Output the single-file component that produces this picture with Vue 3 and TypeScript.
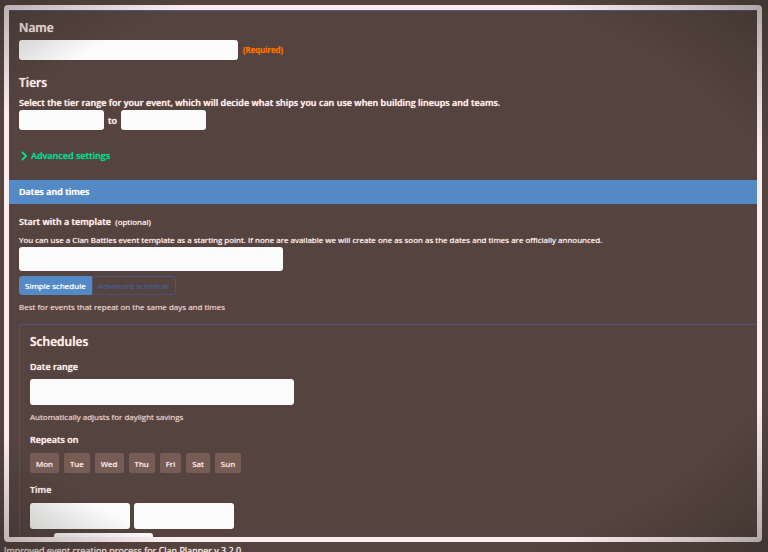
<script setup lang="ts">
import { ref } from 'vue'

const days = ['Mon', 'Tue', 'Wed', 'Thu', 'Fri', 'Sat', 'Sun']
const selectedDays = ref<string[]>([])
const mode = ref<'simple' | 'advanced'>('simple')

function toggleDay(day: string): void {
  selectedDays.value = selectedDays.value.includes(day)
    ? selectedDays.value.filter((d) => d !== day)
    : [...selectedDays.value, day]
}
</script>

<template>
  <main class="page">
    <form class="frame" @submit.prevent>
      <section class="section general">
        <label class="heading" for="name">Name</label>
        <div class="row name-row">
          <input id="name" class="field name-field" type="text" required />
          <span class="required">(Required)</span>
        </div>
        <h2 class="heading tiers">Tiers</h2>
        <p class="text">Select the tier range for your event, which will decide what ships you can use when building lineups and teams.</p>
        <div class="row">
          <select id="tier-from" class="field tier" aria-label="Lowest tier"></select>
          <label class="to" for="tier-to">to</label>
          <select id="tier-to" class="field tier"></select>
        </div>
        <button type="button" class="advanced">
          <svg class="chevron" viewBox="0 0 6 10" aria-hidden="true"><path d="M1 1l4 4-4 4" /></svg>
          Advanced settings
        </button>
      </section>

      <h2 class="bar">Dates and times</h2>

      <section class="section">
        <label class="label first" for="template">Start with a template <span class="optional">(optional)</span></label>
        <p class="text small">You can use a Clan Battles event template as a starting point. If none are available we will create one as soon as the dates and times are officially announced.</p>
        <select id="template" class="field template"></select>
        <div class="switch">
          <button type="button" :class="{ active: mode === 'simple' }" @click="mode = 'simple'">Simple schedule</button>
          <button type="button" :class="{ active: mode === 'advanced' }" @click="mode = 'advanced'">Advanced schedule</button>
        </div>
        <p class="hint">Best for events that repeat on the same days and times</p>

        <div class="panel">
          <h3 class="heading">Schedules</h3>
          <label class="label" for="range">Date range</label>
          <input id="range" class="field large range" type="text" />
          <p class="hint">Automatically adjusts for daylight savings</p>
          <h4 class="label">Repeats on</h4>
          <div class="days">
            <button
              v-for="day in days"
              :key="day"
              type="button"
              :class="{ chosen: selectedDays.includes(day) }"
              :aria-pressed="selectedDays.includes(day)"
              @click="toggleDay(day)"
            >{{ day }}</button>
          </div>
          <label class="label" for="start">Time</label>
          <div class="row times">
            <input id="start" class="field large time" type="text" />
            <input class="field large time" type="text" aria-label="End time" />
          </div>
          <select class="field large zone" aria-label="Time zone"></select>
        </div>
      </section>
    </form>
    <p class="caption">Improved event creation process for Clan Planner v.3.2.0</p>
  </main>
</template>

<style>
body {
  margin: 0;
  background: #54433f;
}
</style>

<style scoped>
.page {
  position: relative;
  box-sizing: border-box;
  display: flex;
  flex-direction: column;
  height: 100vh;
  padding: 5px 6px 0 4px;
  overflow: hidden;
  background: #54433f;
  color: #ffede8;
  font-family: "Open Sans", Lato, sans-serif;
  font-weight: 600;
  text-shadow: 0 0 1px currentColor;
}
.page::after {
  content: "";
  position: absolute;
  inset: 0;
  pointer-events: none;
  background: radial-gradient(ellipse farthest-corner at 48% 50%, transparent 76%, rgba(35, 33, 27, 0.38) 100%);
}
h2, h3, h4, p { margin: 0; font-weight: inherit; }
button { font-family: inherit; font-weight: inherit; text-shadow: inherit; cursor: pointer; }
.frame {
  flex: 1;
  min-height: 0;
  overflow: hidden;
  border: 5px solid #fbecee;
  border-radius: 4px;
}
.section { padding-left: 10px; }
.general { padding-top: 8px; border-top: 1px solid #4c5a85; }
.row { display: flex; align-items: center; }
.heading { display: block; font-size: 12px; line-height: 18px; }
.field {
  display: block;
  box-sizing: border-box;
  height: 20px;
  margin: 0;
  padding: 0 8px;
  border: 0;
  border-radius: 3px;
  background: #fbfbfb;
  color: #54433f;
  font: 9px/18px "Open Sans", sans-serif;
  appearance: none;
}
.name-row { margin-top: 3px; gap: 5px; }
.name-field { width: 219px; }
.required { color: #ff7300; font-size: 8px; line-height: 14px; }
.tiers { margin-top: 14px; }
.text { margin-top: 4px; font-size: 9px; font-weight: 550; line-height: 14px; }
.small { margin-top: 3px; font-size: 8px; font-weight: 500; }
.tier { width: 85px; }
.to { padding: 0 4px; font-size: 9px; }
.advanced {
  display: flex;
  align-items: center;
  gap: 4px;
  margin: 18px 0 16px;
  padding: 0 2px;
  border: 0;
  background: none;
  color: #08d88b;
  font-size: 9px;
  line-height: 16px;
}
.chevron { width: 6px; height: 10px; fill: none; stroke: currentColor; stroke-width: 2; }
.bar {
  padding: 0 10px;
  background: #5389c4;
  color: #fff;
  font-size: 9px;
  line-height: 24px;
}
.label { display: block; margin-top: 8px; font-size: 9px; line-height: 16px; }
.first { margin-top: 10px; }
.optional { margin-left: 2px; font-size: 8px; font-weight: 500; }
.template { width: 264px; height: 24px; }
.switch { display: flex; margin-top: 5px; }
.switch button {
  height: 19px;
  padding: 0 5px;
  border: 1px solid #4d5276;
  border-radius: 0 3px 3px 0;
  background: none;
  color: #4a5b88;
  font-size: 8px;
  font-weight: 500;
}
.switch button:first-child { border-radius: 3px 0 0 3px; }
.switch .active { border-color: #5389c4; background: #5389c4; color: #fff; }
.hint { margin-top: 4px; color: #e2c7c0; font-size: 8px; font-weight: 500; line-height: 15px; }
.panel {
  margin-top: 10px;
  padding: 8px 10px;
  border: 1px solid #4d5276;
  border-right: 0;
  border-radius: 3px 0 0 3px;
}
.large { height: 26px; }
.range { width: 264px; margin-top: 4px; }
.days { display: flex; gap: 5px; margin: 5px 0 9px; }
.days button {
  height: 20px;
  padding: 0 6px;
  border: 0;
  border-radius: 2px;
  background: #775b55;
  color: #ffede8;
  font-size: 8px;
  font-weight: 500;
}
.days .chosen { background: #5389c4; }
.times { gap: 4px; margin-top: 5px; }
.time { width: 100px; }
.zone { width: 99px; margin: 4px 0 0 24px; }
.caption { height: 10px; font-size: 9px; font-weight: 500; line-height: 18px; }
</style>
